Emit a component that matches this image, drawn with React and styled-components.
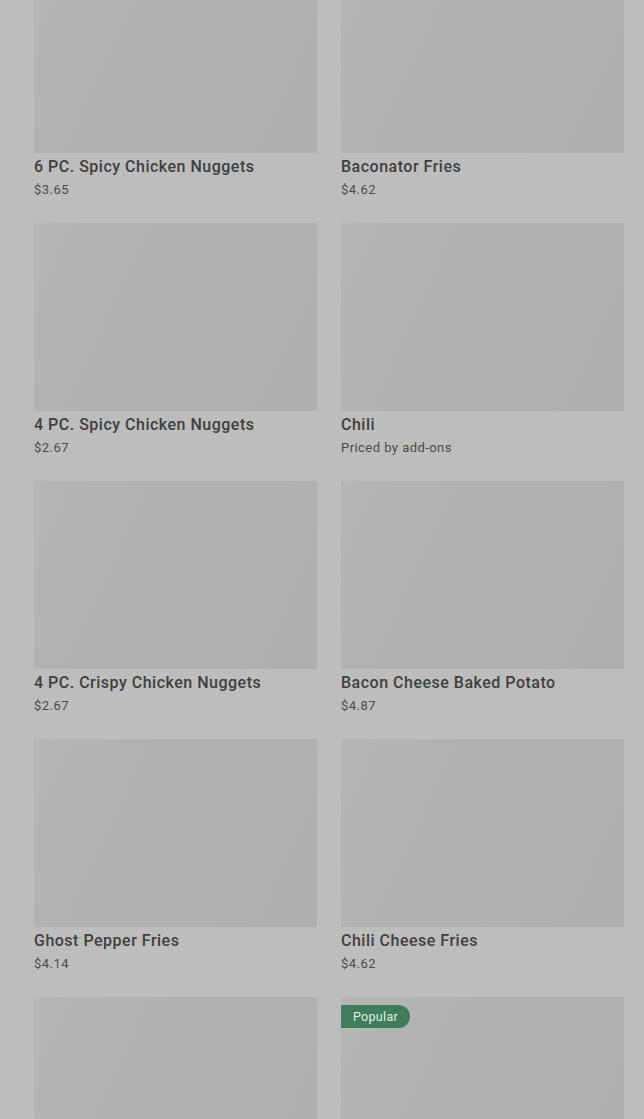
import React from 'react';
import styled, { createGlobalStyle } from 'styled-components';

const GlobalStyle = createGlobalStyle`
  html, body {
    margin: 0;
    padding: 0;
    background: #bdbdbd;
    overflow: hidden;
  }
  body {
    font-family: Roboto, "Liberation Sans", sans-serif;
  }
`;

const Page = styled.div`
  width: 644px;
  height: 1119px;
  overflow: hidden;
  background: #bdbdbd;
`;

// the list is scrolled a little, so the first row starts above the fold
const MenuGrid = styled.div`
  display: grid;
  grid-template-columns: 283px 283px;
  column-gap: 24px;
  row-gap: 24px;
  padding: 0 20px 0 34px;
  margin-top: -35px;
`;

const Card = styled.div`
  position: relative;
  display: flex;
  flex-direction: column;
`;

const Thumb = styled.div`
  height: 188px;
  background: linear-gradient(115deg, #b6b6b6 0%, #b1b1b1 35%, #afafaf 100%);
`;

const Title = styled.div`
  margin-top: 4px;
  font-size: 16px;
  line-height: 20px;
  font-weight: 500;
  letter-spacing: 0.5px;
  color: #404040;
`;

const Price = styled.div`
  margin-top: 4px;
  font-size: 13px;
  line-height: 18px;
  letter-spacing: 0.45px;
  color: #4c4c4c;
`;

const Badge = styled.span`
  position: absolute;
  top: 8px;
  left: 0;
  height: 23px;
  padding: 0 12px;
  display: inline-flex;
  align-items: center;
  background: #3f7d5c;
  color: #e4ece7;
  font-size: 12.5px;
  letter-spacing: 0.3px;
  border-radius: 0 12px 12px 0;
`;

const items = [
  { id: 1, name: '6 PC. Spicy Chicken Nuggets', price: '$3.65' },
  { id: 2, name: 'Baconator Fries', price: '$4.62' },
  { id: 3, name: '4 PC. Spicy Chicken Nuggets', price: '$2.67' },
  { id: 4, name: 'Chili', price: 'Priced by add-ons' },
  { id: 5, name: '4 PC. Crispy Chicken Nuggets', price: '$2.67' },
  { id: 6, name: 'Bacon Cheese Baked Potato', price: '$4.87' },
  { id: 7, name: 'Ghost Pepper Fries', price: '$4.14' },
  { id: 8, name: 'Chili Cheese Fries', price: '$4.62' },
  { id: 9 },
  { id: 10, popular: true },
];

export default function App() {
  return (
    <Page>
      <GlobalStyle />
      <MenuGrid>
        {items.map((item) => (
          <Card key={item.id}>
            <Thumb />
            {item.popular && <Badge>Popular</Badge>}
            {item.name && <Title>{item.name}</Title>}
            {item.price && <Price>{item.price}</Price>}
          </Card>
        ))}
      </MenuGrid>
    </Page>
  );
}
